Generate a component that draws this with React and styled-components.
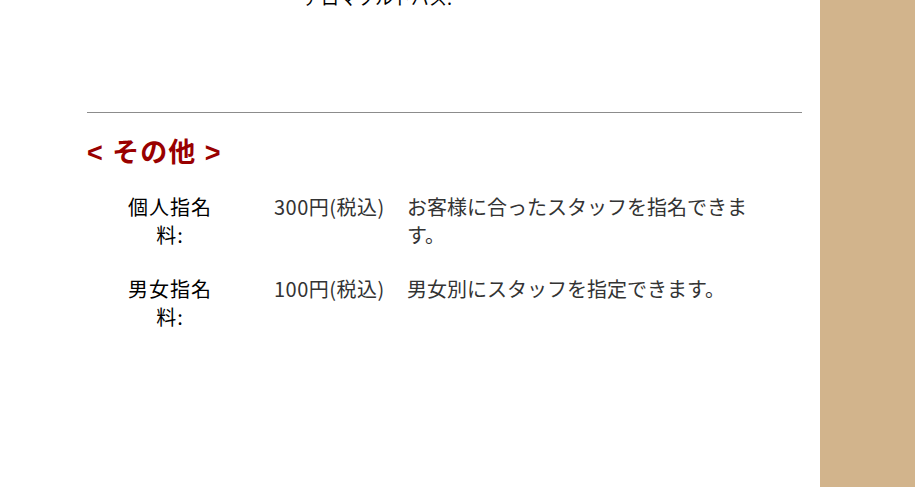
import React from "react";
import styled, { createGlobalStyle } from "styled-components";

const Global = createGlobalStyle`
  html, body { margin: 0; padding: 0; background: #fff; }
  body { font-family: "Noto Sans CJK JP", "Noto Sans", sans-serif; }
`;

const Page = styled.div`
  display: flex;
  align-items: flex-start;
  width: 915px;
  height: 499px;
  overflow: hidden;
`;

const Main = styled.main`
  width: 820px;
  box-sizing: border-box;
  padding: 0 18px 0 87px;
`;

const Sidebar = styled.aside`
  width: 95px;
  height: 487px;
  background: #d2b48c;
  flex-shrink: 0;
`;

const TopNote = styled.p`
  margin: -17px 0 0 216px;
  font-size: 18px;
  line-height: 28px;
  color: #000;
`;

const Rule = styled.hr`
  margin: 101px 0 0;
  border: 0;
  border-top: 1px solid #8c8c8c;
  height: 0;
`;

const Heading = styled.h2`
  margin: 21px 0 21px;
  font-family: "Liberation Sans", "Noto Sans CJK JP", sans-serif;
  font-size: 27px;
  font-weight: 700;
  line-height: 38px;
  letter-spacing: 1px;
  color: #990000;
`;

const Row = styled.div`
  display: grid;
  grid-template-columns: 154px 133px 348px;
  padding-left: 33px;
  margin-bottom: 26px;
  font-size: 20px;
  line-height: 28px;
`;

const Label = styled.div`
  width: 100px;
  text-align: center;
  color: #000;
  letter-spacing: 1px;
`;

const Price = styled.div`
  color: #333;
  white-space: nowrap;
  letter-spacing: 0.5px;
`;

const Desc = styled.div`
  color: #333;
`;

const fees = [
  { label: "個人指名料:", price: "300円(税込)", desc: "お客様に合ったスタッフを指名できます。" },
  { label: "男女指名料:", price: "100円(税込)", desc: "男女別にスタッフを指定できます。" },
];

export default function App() {
  return (
    <>
      <Global />
      <Page>
        <Main>
          <TopNote>アロマソルトバス.</TopNote>
          <Rule />
          <Heading>&lt; その他 &gt;</Heading>
          {fees.map((f) => (
            <Row key={f.label}>
              <Label>{f.label}</Label>
              <Price>{f.price}</Price>
              <Desc>{f.desc}</Desc>
            </Row>
          ))}
        </Main>
        <Sidebar />
      </Page>
    </>
  );
}
